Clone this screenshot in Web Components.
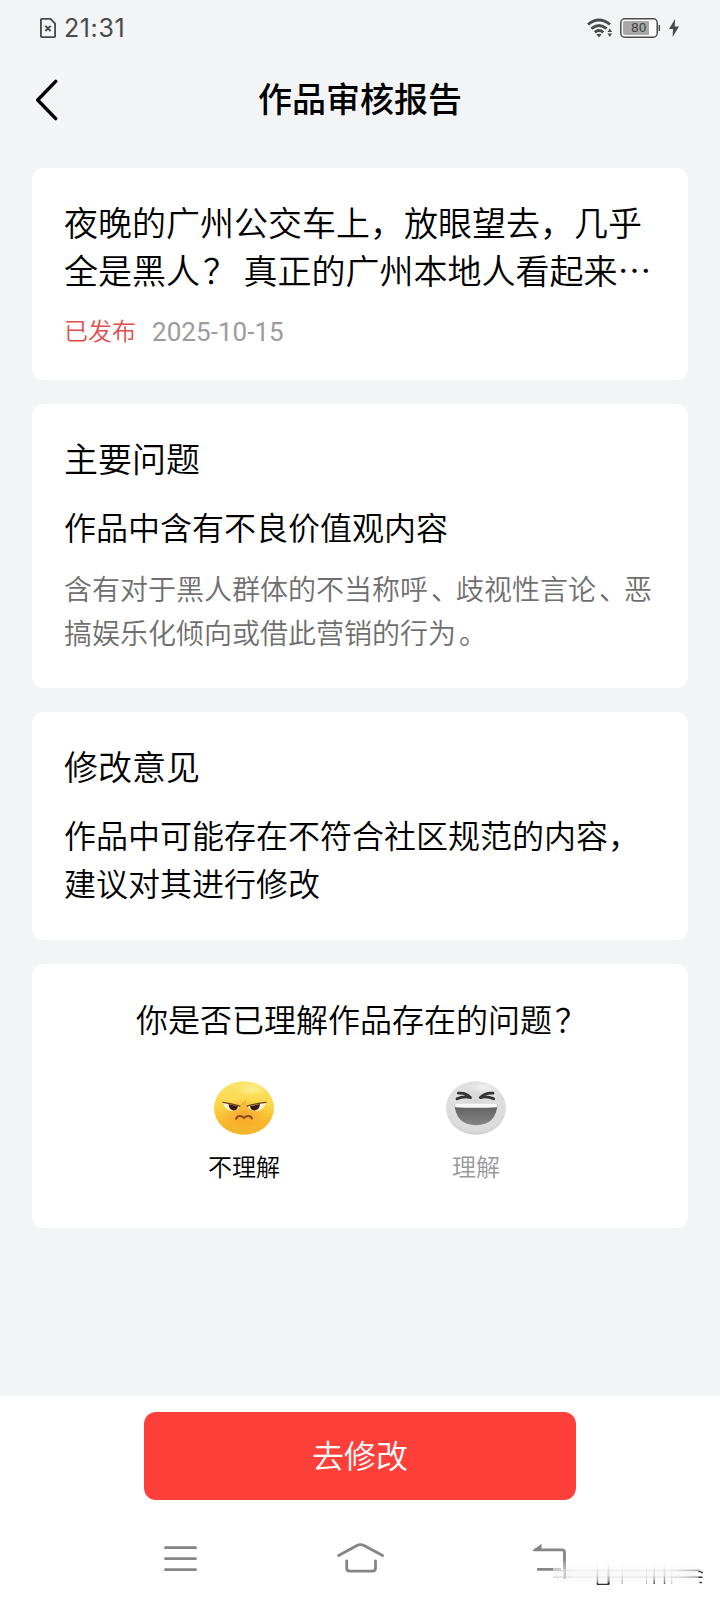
<!DOCTYPE html>
<html lang="zh-CN">
<head>
<meta charset="utf-8">
<title>作品审核报告</title>
<style>
html,body{margin:0;padding:0}
body{width:720px;height:1600px;overflow:hidden;background:#f3f4f6;color:#000;font-family:"Noto Sans CJK SC",sans-serif;font-weight:350}
</style>
</head>
<body>
<report-page></report-page>
<script>
function define(name, html){
  const t=document.createElement('template');
  t.innerHTML=html;
  customElements.define(name,class extends HTMLElement{
    constructor(){super();this.attachShadow({mode:'open'}).appendChild(t.content.cloneNode(true));}
  });
}

define('status-bar',`
<style>
:host{display:flex;align-items:center;height:56px;padding:0 41px 0 40px;box-sizing:border-box;color:#4a4b4d}
.time{font:400 25px/28px Inter,sans-serif;letter-spacing:.6px;margin:0 0 0 8px;flex:1}
svg{display:block}
.wifi{margin-right:7px}.bat{margin-right:8px}
</style>
<svg width="16" height="20" viewBox="0 0 16 20" fill="none" stroke="#4a4b4d" stroke-width="1.9"><path d="M2.2.9H10.5L15.1 5.6V17.8Q15.1 19.1 13.8 19.1H2.2Q.9 19.1.9 17.8V2.2Q.9.9 2.2.9Z"/><path d="M5.4 7.8 10.6 13M10.6 7.8 5.4 13"/></svg>
<span class="time">21:31</span>
<svg class="wifi" width="26" height="20" viewBox="0 0 26 20" fill="none" stroke="#4a4b4d" stroke-width="2.9"><path d="M1 6.5Q12 -2.6 23 6.5M4.4 10.6Q12 4.2 19.6 10.6M7.8 14.4Q12 10.8 16.2 14.4"/><path d="M9.3 16.6Q12 14.8 14.7 16.6L12 19.3Z" fill="#4a4b4d" stroke="none"/><path d="M20.5 14 22.8 10.6 25.1 14ZM20.5 15.6H25.1L22.8 19Z" fill="#4a4b4d" stroke="none"/></svg>
<svg class="bat" width="41" height="20" viewBox="0 0 41 20"><rect x=".8" y=".8" width="36.4" height="18.4" rx="4" fill="#fdfdfd" stroke="#4a4b4d" stroke-width="1.5"/><path d="M5 3H29V17H5Q3 17 3 15V5Q3 3 5 3Z" fill="#a8a8a9"/><path d="M39.3 7V13" stroke="#4a4b4d" stroke-width="1.5"/><text x="19" y="14.4" font-family="Liberation Sans,sans-serif" font-size="13" letter-spacing=".6" text-anchor="middle" fill="#38393a">80</text></svg>
<svg width="10" height="18" viewBox="0 0 10 18"><path d="M6 0 0 10H4L3.6 18 10 7.4H5.8Z" fill="#4a4b4d"/></svg>
`);

define('nav-header',`
<style>
:host{display:grid;grid-template-columns:1fr auto 1fr;align-items:center;height:88px}
svg{display:block;margin:0 0 0 34px}
h1{margin:-4px 0 0;font-size:34px;line-height:48px;font-weight:500}
</style>
<svg width="26" height="42" viewBox="0 0 26 42" fill="none" stroke="#000" stroke-width="3.4" stroke-linecap="round" stroke-linejoin="round"><path d="M21.7 2.4 3.7 21 21.7 39.6"/></svg>
<h1><slot></slot></h1>
`);

define('report-card',`
<style>
:host{display:block;box-sizing:border-box;background:#fff;border-radius:12px;padding:30px 32px 0}
</style>
<slot></slot>
`);

define('work-summary',`
<style>
:host{display:block}
.t{font-size:34px;line-height:48px;white-space:nowrap;word-spacing:2px}
.m{display:flex;align-items:center;gap:16px;margin-top:20px;line-height:32px;height:32px}
.s{font-size:24px;color:#df4f4c}
.d{font:400 26px/32px Roboto,sans-serif;letter-spacing:.05px;color:#9b9b9b;margin-top:4px}
</style>
<div class="t"><slot></slot></div>
<div class="m"><span class="s"><slot name="state"></slot></span><span class="d"><slot name="date"></slot></span></div>
`);

define('issue-section',`
<style>
:host{display:block;white-space:nowrap}
h2{margin:0;font-size:34px;line-height:48px;font-weight:inherit}
.sub{margin-top:20px;font-size:32px;line-height:48px}
.desc{margin-top:16px;font-size:28px;line-height:44px;color:#6f6f6f}
</style>
<h2><slot name="heading"></slot></h2>
<div class="sub"><slot></slot></div>
<div class="desc"><slot name="desc"></slot></div>
`);

define('face-angry',`
<style>:host{display:block}svg{display:block}</style>
<svg width="62" height="54" viewBox="0 0 62 54">
<defs>
<linearGradient id="a" x1="0" y1="0" x2="0" y2="1"><stop offset="0" stop-color="#fbe56a"/><stop offset=".45" stop-color="#fbd649"/><stop offset=".78" stop-color="#f9b52c"/><stop offset="1" stop-color="#f2b632"/></linearGradient>
<radialGradient id="b" cx=".5" cy=".5" r=".5"><stop offset="0" stop-color="#f08a25" stop-opacity=".5"/><stop offset="1" stop-color="#f08a25" stop-opacity="0"/></radialGradient>
<radialGradient id="h" cx=".5" cy=".5" r=".5"><stop offset="0" stop-color="#fff6a8" stop-opacity=".7"/><stop offset="1" stop-color="#fff6a8" stop-opacity="0"/></radialGradient>
</defs>
<ellipse cx="31" cy="27" rx="30" ry="26.8" fill="url(#a)"/>
<ellipse cx="39" cy="8" rx="15" ry="7" fill="url(#h)"/>
<ellipse cx="31" cy="32" rx="23" ry="15" fill="url(#b)"/>
<path d="M10 21.6 26.5 25.4Q24.5 30.4 18 30 11.5 29 10 21.6Z" fill="#fff5cf"/>
<path d="M53 21.6 34.5 25.4Q37.5 30.4 44 30 51 29 53 21.6Z" fill="#fff5cf"/>
<path d="M15.5 23 25 25.2Q24.5 29.5 20.3 29.5 16 28.8 15.5 23ZM47 23 37 25.2Q37.5 29.5 41.8 29.5 46.5 28.8 47 23Z" fill="#3b1a14"/>
<path d="M10 21.3Q18 22.4 27 25.2M53 21.3Q43 22.4 34 25.2" stroke="#68401e" stroke-width="1.3" fill="none" stroke-linecap="round"/>
<path d="M28.8 24 30.5 21M32.5 24 31.8 19.5" stroke="#d69b2b" stroke-width=".8"/>
<path d="M23 37.8Q24 35 27 35 29 35 31 36.8 33 35 35.3 35 38 35 39 37.6" fill="none" stroke="#8f471b" stroke-width="2" stroke-linecap="round"/>
</svg>
`);

define('face-laugh',`
<style>:host{display:block}svg{display:block}</style>
<svg width="62" height="54" viewBox="0 0 62 54">
<defs>
<radialGradient id="a" cx=".5" cy=".4" r=".62"><stop offset="0" stop-color="#d6d6d6"/><stop offset=".55" stop-color="#e0e0e0"/><stop offset=".85" stop-color="#dbdbdb"/><stop offset="1" stop-color="#c8c8c8"/></radialGradient>
<linearGradient id="b" x1="0" y1="0" x2="0" y2="1"><stop offset="0" stop-color="#5c5c5c"/><stop offset="1" stop-color="#858585"/></linearGradient>
<radialGradient id="h"><stop offset="0" stop-color="#fff" stop-opacity=".6"/><stop offset="1" stop-color="#fff" stop-opacity="0"/></radialGradient>
</defs>
<ellipse cx="31" cy="27" rx="30" ry="26.8" fill="url(#a)"/>
<ellipse cx="38" cy="6.5" rx="15" ry="6" fill="url(#h)"/>
<path d="M9.5 22.5H52.5Q51.5 44 31 44.2 10.5 44 9.5 22.5Z" fill="url(#b)"/>
<path d="M9.3 22.2H52.7L51.8 26.2Q31 27.2 10.4 26.2Z" fill="#f8f8f8"/>
<path d="M13.3 12.2Q21 11.4 25.5 16.6 18.5 14.8 12 17.8M48 12.2Q40.5 11.4 35.3 16.6 42 14.8 48.8 17.8" fill="none" stroke="#343434" stroke-width="2.8" stroke-linecap="round" stroke-linejoin="round"/>
</svg>
`);

define('feedback-choice',`
<style>
:host{display:flex;flex-direction:column;align-items:center;font-size:24px;line-height:32px}
.l{margin-top:15px}
</style>
<slot name="face"></slot><span class="l"><slot></slot></span>
`);

define('feedback-poll',`
<style>
:host{display:block;text-align:center}
.q{font-size:32px;line-height:48px}
.g{display:grid;grid-template-columns:232px 232px;justify-content:center;margin-top:39px}
</style>
<div class="q"><slot></slot></div>
<div class="g"><slot name="choice"></slot></div>
`);

define('primary-button',`
<style>
:host{display:block}
button{display:block;width:432px;height:88px;margin:0;padding:0 0 4px;border:0;border-radius:12px;background:#ff403a;color:#fff;font:inherit;font-size:32px;line-height:48px}
</style>
<button><slot></slot></button>
`);

define('system-nav',`
<style>
:host{display:flex;justify-content:space-between;align-items:center;height:40px;margin-top:39px;padding:0 151px 0 164px;position:relative;align-self:stretch}
svg{display:block;fill:none;stroke:#858585;stroke-width:2.8}
.home{margin:-2px 8px 0 0}
.back{margin-top:-4px}
.w{position:absolute;left:550px;top:18px;stroke:none}
</style>
<svg width="33" height="26" viewBox="0 0 33 26" stroke-linecap="round"><path d="M1.5 1.7H31.5M1.5 12.7H31.5M1.5 23.7H31.5"/></svg>
<svg class="home" width="48" height="30" viewBox="0 0 48 30" stroke-linecap="round"><path d="M1.7 12.5 19.5 2.8Q23.5 .6 27.5 2.8L45.6 12.5M9.7 18V25Q9.7 28.2 12.9 28.2H35.3Q38.5 28.2 38.5 25V18"/></svg>
<svg class="back" width="37" height="30" viewBox="0 0 37 30"><path d="M2 7.8H30Q32.5 7.8 32.5 10.3V27M5 27.3H29"/><path d="M0 9 9.5 1.8V9Z" fill="#858585" stroke="none"/></svg>
<svg class="w" width="156" height="32" viewBox="0 0 156 32">
<defs>
<linearGradient id="v" x1="0" y1="0" x2="0" y2="1"><stop offset="0" stop-color="#888" stop-opacity="0"/><stop offset=".6" stop-color="#888" stop-opacity=".3"/><stop offset="1" stop-color="#333" stop-opacity=".8"/></linearGradient>
<linearGradient id="f" x1="0" y1="0" x2="0" y2="1"><stop offset="0" stop-color="#fff" stop-opacity=".2"/><stop offset=".5" stop-color="#f7f7f7" stop-opacity=".9"/><stop offset="1" stop-color="#fff" stop-opacity=".9"/></linearGradient>
<linearGradient id="r" x1="0" y1="0" x2="1" y2="0"><stop offset="0" stop-color="#aaa" stop-opacity=".4"/><stop offset=".15" stop-color="#bbb" stop-opacity=".15"/><stop offset=".8" stop-color="#bbb" stop-opacity=".2"/><stop offset="1" stop-color="#888" stop-opacity=".7"/></linearGradient>
</defs>
<rect x="3" y="5" width="143" height="24" fill="url(#f)"/>
<path d="M13.5 3H16V22H13.5Z" fill="#999" opacity=".45"/>
<path d="M3 12.4H149V14.2H3ZM3 19.2H149V21H3Z" fill="url(#r)"/>
<path d="M46.7 6H48.2V27H46.7ZM57.5 6H59.7V27H57.5ZM103.4 6H105V27H103.4ZM113.8 6H115.2V27H113.8Z" fill="url(#v)"/>
<path d="M71.5 6H73V27H71.5ZM96 6H97V27H96ZM121.3 6H122.2V27H121.3Z" fill="url(#v)" opacity=".45"/>
<path d="M47.5 26V27.3H58.7V25.5" fill="none" stroke="#333" stroke-width="1.3"/>
<path d="M148.5 14.6H151M148.5 20.2H152.5M149.5 25.6H152M151 15.6H153" stroke="#333" stroke-width="1.5"/>
</svg>
`);

define('report-page',`
<style>
:host{display:flex;flex-direction:column;width:720px;height:1600px;background:#f3f4f6}
main{flex:1;display:flex;flex-direction:column;gap:24px;padding:24px 32px 0}
.a{height:212px}.b{height:284px}.c{height:228px}.d{height:264px}
.p{display:inline-block;width:1em;text-indent:3px}
.off{color:#999}
footer{height:204px;box-sizing:border-box;background:#fff;padding-top:16px;display:flex;flex-direction:column;align-items:center}
</style>
<status-bar></status-bar>
<nav-header>作品审核报告</nav-header>
<main>
<report-card class="a"><work-summary>夜晚的广州公交车上，放眼望去，几乎<br>全是黑人<span class="p">？</span> 真正的广州本地人看起来…<span slot="state">已发布</span><span slot="date">2025-10-15</span></work-summary></report-card>
<report-card class="b"><issue-section><span slot="heading">主要问题</span>作品中含有不良价值观内容<span slot="desc">含有对于黑人群体的不当称呼<span class="p">、</span>歧视性言论<span class="p">、</span>恶<br>搞娱乐化倾向或借此营销的行为<span class="p">。</span></span></issue-section></report-card>
<report-card class="c"><issue-section><span slot="heading">修改意见</span>作品中可能存在不符合社区规范的内容，<br>建议对其进行修改</issue-section></report-card>
<report-card class="d"><feedback-poll>你是否已理解作品存在的问题<span class="p">？</span>
<feedback-choice slot="choice"><face-angry slot="face"></face-angry>不理解</feedback-choice>
<feedback-choice slot="choice" class="off"><face-laugh slot="face"></face-laugh>理解</feedback-choice>
</feedback-poll></report-card>
</main>
<footer><primary-button>去修改</primary-button><system-nav></system-nav></footer>
`);
</script>
</body>
</html>
